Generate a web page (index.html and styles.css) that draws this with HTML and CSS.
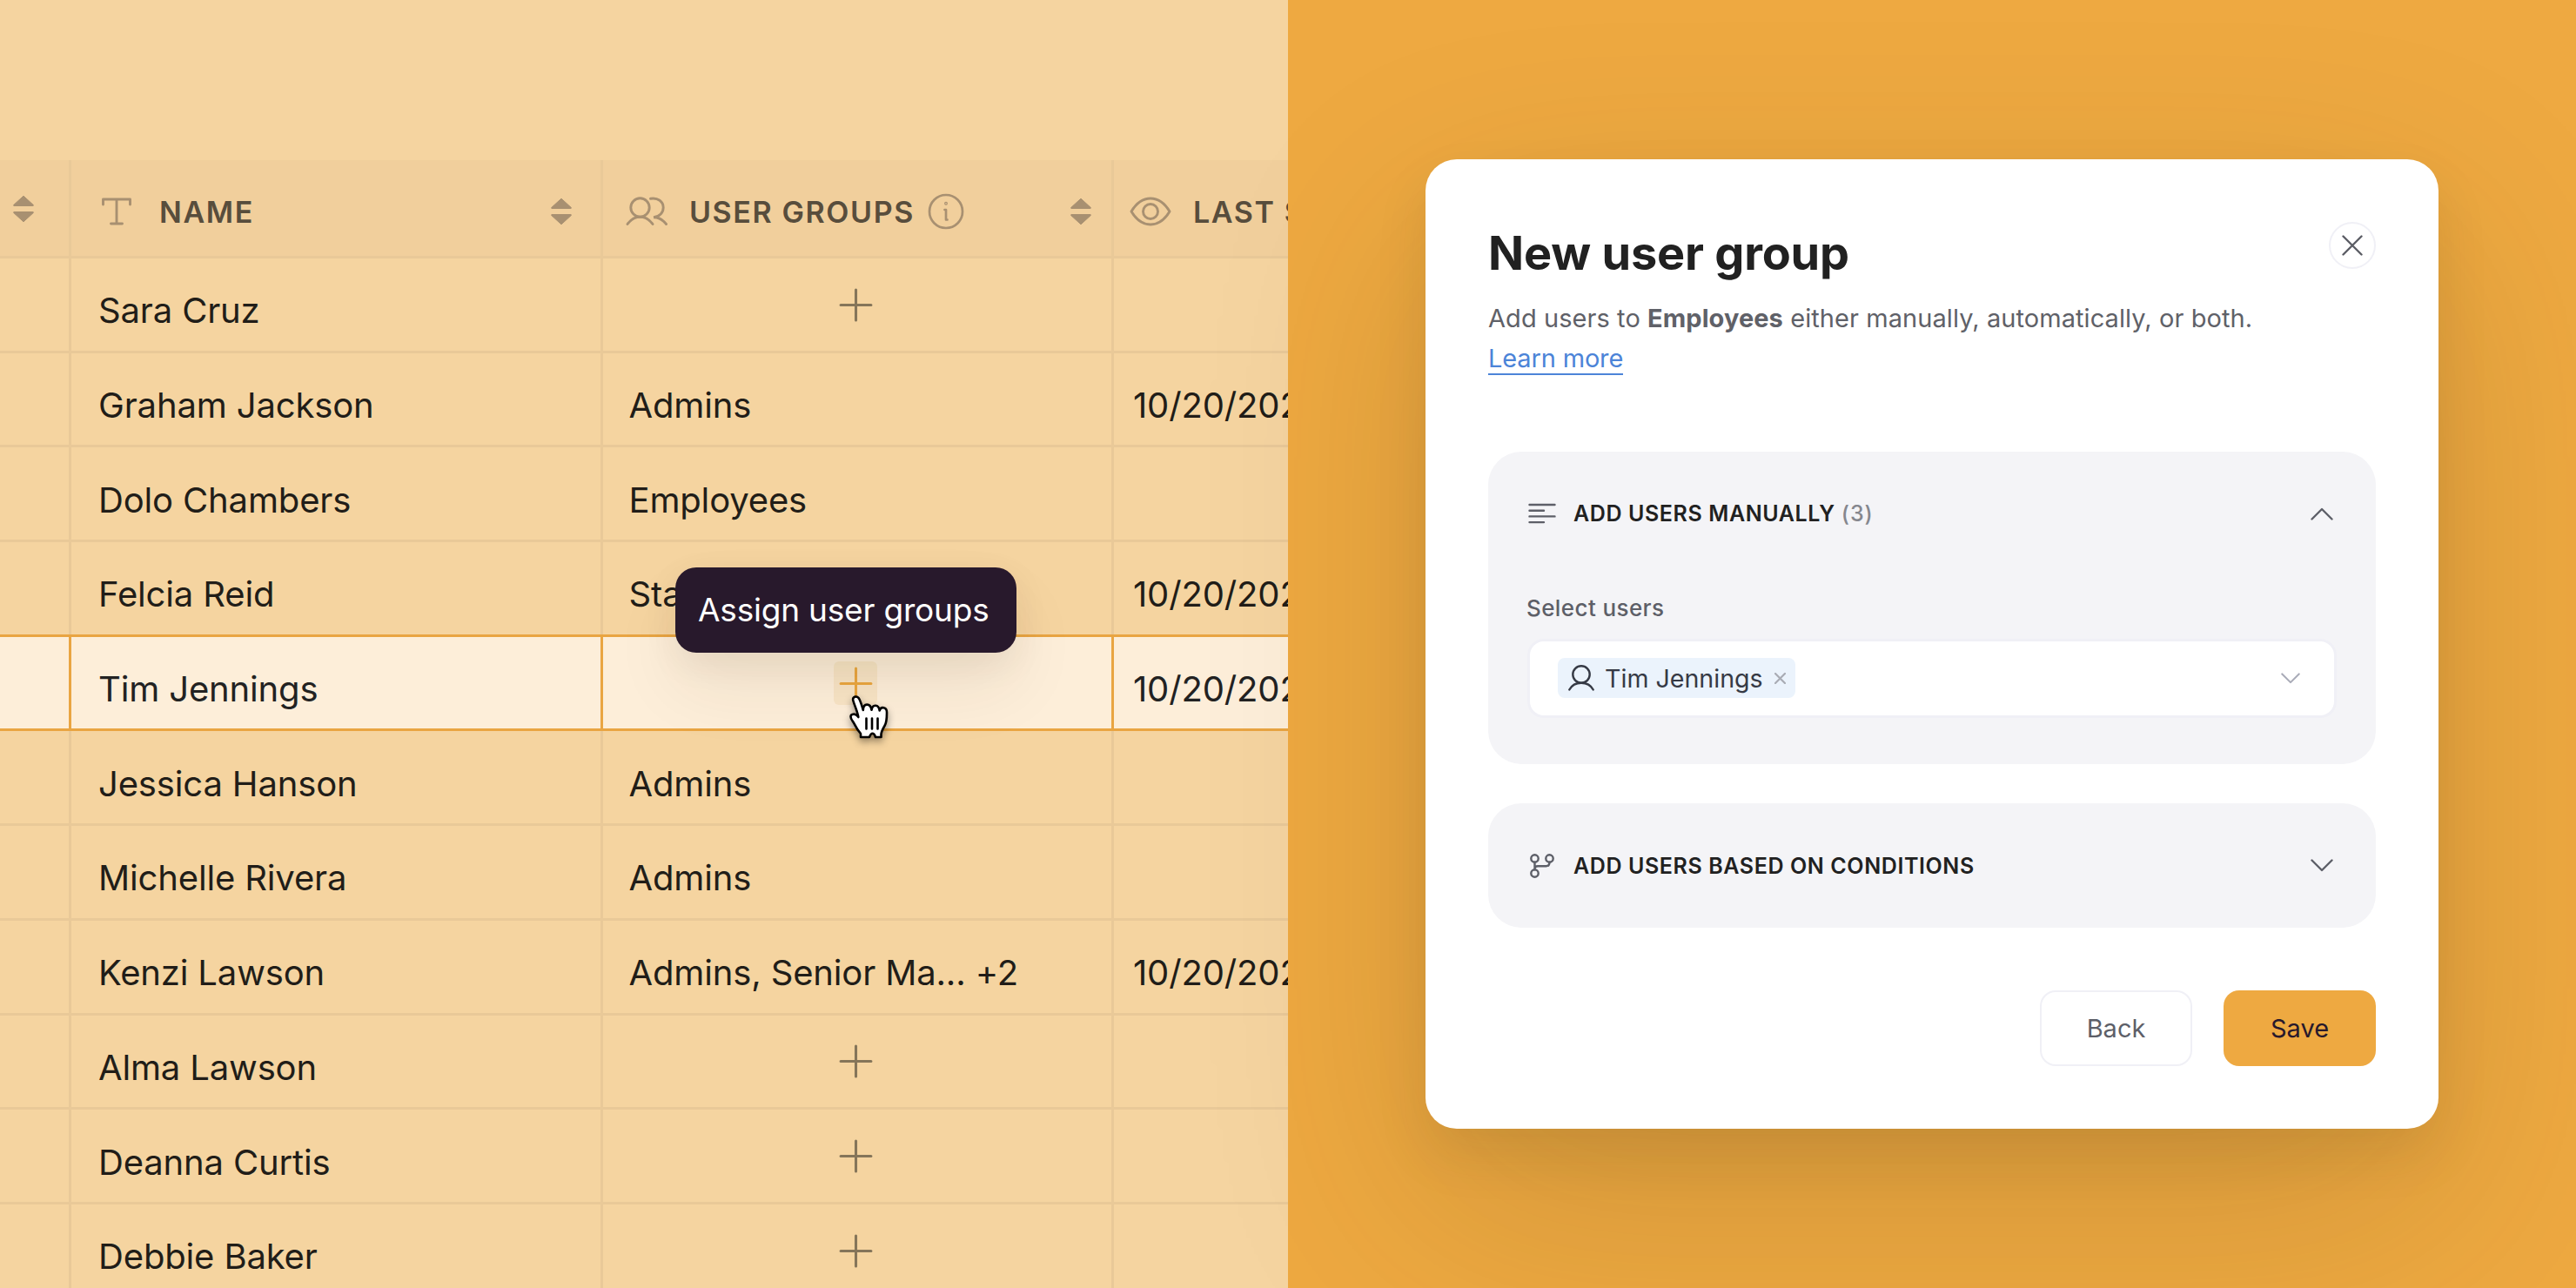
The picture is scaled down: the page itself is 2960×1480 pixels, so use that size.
FILE: index.html
```html
<!DOCTYPE html>
<html lang="en">
<head>
<meta charset="utf-8">
<title>User groups</title>
<link rel="stylesheet" href="styles.css">
</head>
<body>
<svg class="sprite" aria-hidden="true">
  <symbol id="sort" viewBox="0 0 26 32"><path d="M13 1.2 24.3 11.5a.6.6 0 0 1-.4 1H2.100a.6.6 0 0 1-.4-1ZM13 30.800 24.300 20.500a.6.6 0 0 0-.4-1H2.100a.6.6 0 0 0-.4 1Z" fill="currentColor" stroke="currentColor" stroke-width="1" stroke-linejoin="round"/></symbol>
  <symbol id="plus" viewBox="0 0 40 40"><path d="M20 3v34M3 20h34" fill="none" stroke="currentColor" stroke-width="3" stroke-linecap="round"/></symbol>
  <symbol id="down" viewBox="0 0 26 15"><path d="M1.500 1.500 13 13 24.500 1.500" fill="none" stroke="currentColor" stroke-width="2.400" stroke-linecap="round" stroke-linejoin="round"/></symbol>
</svg>
<main class="stage">
  <section class="table">
    <div class="row head">
      <div class="cell"><svg class="sort raised"><use href="#sort"/></svg></div>
      <div class="cell">
        <svg class="ico-t" viewBox="0 0 34 32" fill="none" stroke="currentColor" stroke-width="2.900" stroke-linecap="round" stroke-linejoin="round"><path d="M1.500 8V2h31v6M17 2v28M10.500 30h13"/></svg>
        <span class="label">NAME</span>
        <svg class="sort"><use href="#sort"/></svg>
      </div>
      <div class="cell">
        <svg class="ico-users" viewBox="0 0 48 34" fill="none" stroke="currentColor" stroke-width="2.900" stroke-linecap="round"><circle cx="16.500" cy="12.500" r="10.700"/><path d="M2 31.500C6 26 11 23.200 16.500 23.200S27 26 31 31.500M28.500 2.200C37 .8 43.200 5.500 43.200 12.500c0 5.800-4.200 10.400-11.200 11.200 5.500-.2 10.500 2.800 14.500 7.800"/></svg>
        <span class="label">USER GROUPS</span>
        <svg class="ico-info" viewBox="0 0 42 42" fill="none" stroke="currentColor" stroke-width="2.700" stroke-linecap="round" stroke-linejoin="round"><circle cx="21" cy="21" r="19"/><path d="M19.500 19h1.500v11.500h1.500"/><circle cx="21" cy="11.800" r=".6"/></svg>
        <svg class="sort"><use href="#sort"/></svg>
      </div>
      <div class="cell">
        <svg class="ico-eye" viewBox="0 0 48 34" fill="none" stroke="currentColor" stroke-width="2.900" stroke-linejoin="round"><path d="M2 17C8 7 15 2 24 2s16 5 22 15C40 27 33 32 24 32S8 27 2 17Z"/><circle cx="24" cy="17" r="8.500"/></svg>
        <span class="label">LAST SEEN</span>
      </div>
    </div>
    <div class="row"><div class="cell"></div><div class="cell">Sara Cruz</div><div class="cell add"><svg class="plus"><use href="#plus"/></svg></div><div class="cell"></div></div>
    <div class="row"><div class="cell"></div><div class="cell">Graham Jackson</div><div class="cell">Admins</div><div class="cell">10/20/2022</div></div>
    <div class="row"><div class="cell"></div><div class="cell">Dolo Chambers</div><div class="cell">Employees</div><div class="cell"></div></div>
    <div class="row"><div class="cell"></div><div class="cell">Felcia Reid</div><div class="cell">Staff</div><div class="cell">10/20/2022</div></div>
    <div class="row active">
      <div class="cell"></div><div class="cell">Tim Jennings</div>
      <div class="cell add">
        <span class="plus-btn"><svg class="plus"><use href="#plus"/></svg></span>
        <div class="tooltip">Assign user groups</div>
        <svg class="cursor" viewBox="0 0 44 50" stroke="#000" stroke-width="2.600" stroke-linecap="round" stroke-linejoin="round"><path fill="#fff" d="M13 48v-4C10 40.500 7.800 37 5.700 32.800 3.800 29.500 1.500 27.500 1.500 24.500c0-3 4.500-3.800 7-1.500l1.800 2C9.500 19 6 12 4.300 6 3 1 9.200-.2 11.500 4.500c2 4.200 3.200 8.500 4.300 12.500.2-8.500 8.400-8.300 9.700-.2 1-7 8.200-6.500 9.200.7 1.500-5.300 8.300-4.200 8.300 1.800 0 6.500.2 11.200-2.500 15.700-2.200 3.700-3.500 6-4 9.500V48h-6.500c-.8-2.500-2-4.200-3.500-4.200S24 45.500 23 48Z"/><path fill="none" d="M19.500 26.500v12M26 26.500v12M32.500 26.500v12"/></svg>
      </div>
      <div class="cell">10/20/2022</div>
    </div>
    <div class="row"><div class="cell"></div><div class="cell">Jessica Hanson</div><div class="cell">Admins</div><div class="cell"></div></div>
    <div class="row"><div class="cell"></div><div class="cell">Michelle Rivera</div><div class="cell">Admins</div><div class="cell"></div></div>
    <div class="row"><div class="cell"></div><div class="cell">Kenzi Lawson</div><div class="cell">Admins, Senior Ma... +2</div><div class="cell">10/20/2022</div></div>
    <div class="row"><div class="cell"></div><div class="cell">Alma Lawson</div><div class="cell add"><svg class="plus"><use href="#plus"/></svg></div><div class="cell"></div></div>
    <div class="row"><div class="cell"></div><div class="cell">Deanna Curtis</div><div class="cell add"><svg class="plus"><use href="#plus"/></svg></div><div class="cell"></div></div>
    <div class="row"><div class="cell"></div><div class="cell">Debbie Baker</div><div class="cell add"><svg class="plus"><use href="#plus"/></svg></div><div class="cell"></div></div>
  </section>
  <section class="side">
    <div class="modal">
      <header class="modal-head">
        <div>
          <h1>New user group</h1>
          <p>Add users to <b>Employees</b> either manually, automatically, or both.<br><a class="learn">Learn more</a></p>
        </div>
        <button class="close"><svg viewBox="0 0 24 24" fill="none" stroke="currentColor" stroke-width="2.400" stroke-linecap="round"><path d="m1.500 1.500 21 21M22.500 1.500l-21 21"/></svg></button>
      </header>
      <div class="panel manual">
        <div class="panel-head">
          <svg class="ico-list" viewBox="0 0 32 24" fill="none" stroke="currentColor" stroke-width="2.400" stroke-linecap="round"><path d="M1.500 2h29M1.500 8.700h16.500M1.500 15.400h29M1.500 22.100h16.500"/></svg>
          <span class="title">ADD USERS MANUALLY <span class="count">(3)</span></span>
          <svg class="chev up"><use href="#down"/></svg>
        </div>
        <div class="field-label">Select users</div>
        <div class="select">
          <div class="chip">
            <svg class="ico-user" viewBox="0 0 30 30" fill="none" stroke="currentColor" stroke-width="2.400" stroke-linecap="round"><circle cx="15" cy="11" r="9.700"/><path d="M1.300 28.500C4 23.500 9 20.700 15 20.700s11 2.800 13.700 7.800"/></svg>
            <span>Tim Jennings</span>
            <svg class="ico-x" viewBox="0 0 13 13" fill="none" stroke="currentColor" stroke-width="2.200" stroke-linecap="round"><path d="m1 1 11 11M12 1 1 12"/></svg>
          </div>
          <svg class="chev small"><use href="#down"/></svg>
        </div>
      </div>
      <div class="panel cond">
        <div class="panel-head">
          <svg class="ico-branch" viewBox="0 0 28 28" fill="none" stroke="currentColor" stroke-width="2.400" stroke-linecap="round"><circle cx="5.500" cy="5.500" r="4.200"/><circle cx="22.500" cy="5.500" r="4.200"/><circle cx="5.500" cy="22.500" r="4.200"/><path d="M5.500 9.700v8.600M22.500 9.700c0 3-1.200 4.600-4 4.600H9c-2 0-3.500 1.200-3.500 3"/></svg>
          <span class="title">ADD USERS BASED ON CONDITIONS</span>
          <svg class="chev"><use href="#down"/></svg>
        </div>
      </div>
      <footer class="actions">
        <button class="btn">Back</button>
        <button class="btn primary">Save</button>
      </footer>
    </div>
  </section>
</main>
</body>
</html>
```
FILE: styles.css
```css
* { box-sizing: border-box; }
body { margin: 0; font-family: Inter, "Liberation Sans", sans-serif; color: #211d18; }
svg { display: block; flex: none; }
.sprite { position: absolute; width: 0; height: 0; }
.stage { display: grid; grid-template-columns: 1480px 1480px; width: 2960px; height: 1480px; overflow: hidden; }

.table { background: #f5d4a0; padding-top: 184px; height: 1480px; overflow: hidden; }
.row { display: grid; grid-template-columns: 82px 611px 587px 320px; height: 108.700px; --line: #e9c998; }
.cell { display: flex; align-items: center; border-right: 3px solid var(--line); border-bottom: 3px solid var(--line); padding: 14px 0 0 31px; font-size: 40px; letter-spacing: -.15px; white-space: nowrap; }
.cell:nth-child(3) { padding-left: 29.500px; }
.cell:nth-child(4) { padding-left: 22px; border-right: 0; }
.cell.add { position: relative; justify-content: center; padding: 1px 4px 0 0; }
.plus { width: 41px; height: 41px; color: #857559; }

.head { height: 113px; background: #f1cf9c; color: #a89071; }
.head .cell { padding-top: 8px; }
.head .cell:nth-child(1) { padding-left: 14px; }
.head .cell:nth-child(3) { padding-left: 26px; }
.head .cell:nth-child(4) { padding-left: 18px; }
.label { font-size: 34px; font-weight: 600; letter-spacing: 1.600px; color: #584d3c; }
.sort { width: 26px; height: 32px; margin-left: auto; margin-right: 32px; }
.sort.raised { margin: 0 0 6px; }
.head .cell:nth-child(3) .sort { margin-right: 22px; }
.ico-t { width: 34px; height: 32px; margin: 0 32px 0 4px; }
.ico-users { width: 48px; height: 34px; margin-right: 25px; }
.ico-info { width: 42px; height: 42px; margin-left: 15px; }
.ico-eye { width: 48px; height: 34px; margin-right: 25px; }

.active { position: relative; background: #fdeed9; --line: #e9a542; color: #222; box-shadow: 0 -3px 0 #e9a542; }
.plus-btn { display: grid; place-items: center; width: 50px; height: 50px; border-radius: 6px; background: #f8e4c5; }
.active .plus { color: #eba741; }
.tooltip { position: absolute; left: 83px; top: -80px; width: 392px; height: 98px; border-radius: 24px; background: #28192c; color: #fff; font-size: 37px; letter-spacing: -.2px; line-height: 98px; padding-left: 26px; box-shadow: 0 12px 40px rgba(60, 40, 10, .07), 0 40px 80px rgba(60, 40, 10, .07); }
.cursor { position: absolute; left: 283px; top: 67px; width: 44px; height: 50px; filter: drop-shadow(0 4px 4px rgba(0, 0, 0, .4)); overflow: visible; }

.side { background: #eea941; display: grid; place-items: center; }
.modal { position: relative; width: 1164px; height: 1114px; padding: 72px; border-radius: 36px; background: #fff; display: flex; flex-direction: column; box-shadow: 0 30px 60px rgba(60, 50, 20, .1), 0 90px 260px rgba(60, 50, 20, .17); }
.modal-head { display: flex; justify-content: space-between; height: 264px; }
h1 { margin: 0; font-size: 54px; line-height: 72px; font-weight: 700; letter-spacing: -.2px; color: #212121; }
p { margin: 16px 0 0; font-size: 29px; line-height: 46px; letter-spacing: .07px; color: #5f6168; white-space: nowrap; }
b { font-weight: 700; }
.learn { color: #4c84d8; border-bottom: 2px solid; letter-spacing: -.15px; }
.close { width: 54px; height: 54px; border: 2px solid #f0f0f6; border-radius: 50%; background: #fff; display: grid; place-items: center; padding: 0; color: #5b5d65; }
.close svg { width: 24px; height: 24px; }
.panel { border-radius: 38px; background: #f4f4f7; padding: 0 45px; }
.manual { height: 360px; }
.cond { height: 143px; margin-top: 45px; }
.panel-head { display: flex; align-items: center; height: 143px; color: #5d5f68; }
.title { font-size: 25px; font-weight: 600; letter-spacing: .6px; color: #212121; }
.count { color: #85878e; font-weight: 500; letter-spacing: 1px; }
.ico-list { width: 32px; height: 24px; margin: 0 20px 0 1px; }
.ico-branch { width: 28px; height: 28px; margin: 0 22px 0 3px; }
.chev { width: 26px; height: 15px; margin-left: auto; margin-right: 4px; }
.chev.up { transform: rotate(180deg); }
.chev.small { width: 22px; height: 13px; color: #a9abb8; margin-right: 39px; }
.field-label { font-size: 26px; font-weight: 500; line-height: 34px; letter-spacing: .4px; margin: 20px 0 18px -1px; color: #5d5f68; }
.select { height: 91px; border: 3px solid #f0f0f6; border-radius: 19px; background: #fff; display: flex; align-items: center; padding-left: 32px; }
.chip { display: flex; align-items: center; width: 273px; height: 46px; border-radius: 8px; background: #ebf3fc; color: #363a45; padding-left: 12px; font-size: 28.600px; }
.ico-user { width: 30px; height: 30px; margin-right: 12px; }
.ico-x { width: 13px; height: 13px; margin-left: auto; margin-right: 11px; color: #a9acb4; }
.actions { display: flex; justify-content: flex-end; gap: 36px; margin-top: 72px; }
.btn { width: 175px; height: 87px; border: 2px solid #f0f0f6; border-radius: 18px; background: #fff; font: 29px Inter, sans-serif; color: #5d5f68; padding: 0; }
.primary { border: 0; background: #eea941; color: #28192c; }
```
